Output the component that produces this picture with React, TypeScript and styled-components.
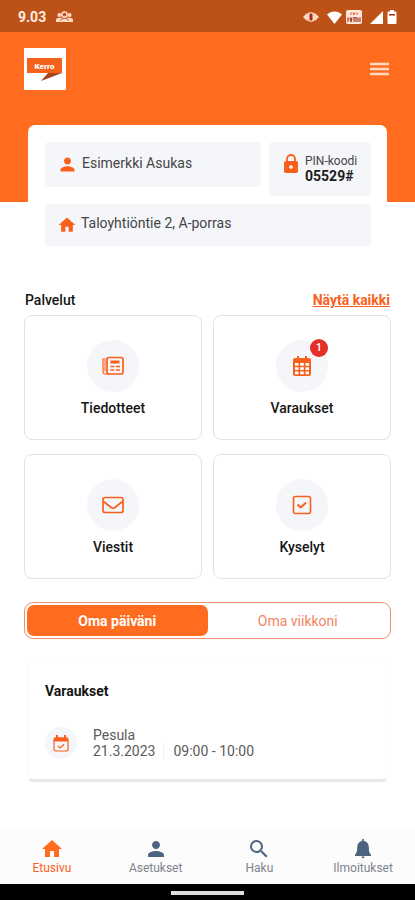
import React, { useState } from "react";
import styled, { createGlobalStyle } from "styled-components";
import { MdHome, MdPerson, MdSearch } from "react-icons/md";

const color = {
  brand: "#ff6c1f",
  accent: "#f9601b",
  status: "#bd5219",
  field: "#f4f6fa",
  slate: "#4d6480",
};

const GlobalStyle = createGlobalStyle`
  *, *::before, *::after { box-sizing: border-box; }
  body {
    margin: 0;
    background: #fff;
    color: #161616;
    font-family: Roboto, "Liberation Sans", sans-serif;
    font-size: 14px;
    line-height: 16px;
  }
  h2, p { margin: 0; padding: 0; }
  svg { display: block; flex: none; }
`;

const Screen = styled.div`
  min-height: 100vh;
  display: flex;
  flex-direction: column;
`;

const StatusBar = styled.div`
  height: 32px;
  padding: 2px 18px 0;
  display: flex;
  align-items: center;
  gap: 10px;
  background: ${color.status};
  color: #ffeee5;
  font-weight: 700;
`;

const StatusIcons = styled.div`
  margin-left: auto;
  display: flex;
  align-items: center;
  gap: 4px;
`;

const Header = styled.header`
  height: 170px;
  padding: 16px 26px 16px 24px;
  display: flex;
  justify-content: space-between;
  align-items: flex-start;
  background: ${color.brand};
`;

const IconButton = styled.button`
  margin-top: 12px;
  padding: 0;
  border: 0;
  background: none;
  color: #ffd9c4;
  cursor: pointer;
`;

const ProfileCard = styled.section`
  margin: -77px 28px 0;
  padding: 17px 16px 0 17px;
  display: grid;
  grid-template-columns: 1fr 102px;
  align-items: start;
  gap: 8px;
  border-radius: 7px 7px 0 0;
  background: #fff;
`;

const Field = styled.div<{ $wide?: boolean; $height: number }>`
  grid-column: ${(p) => (p.$wide ? "1 / -1" : "auto")};
  min-height: ${(p) => p.$height}px;
  padding: 0 12px;
  display: flex;
  align-items: center;
  gap: 4px;
  border-radius: 4px;
  background: ${color.field};
  color: #454545;
  svg { color: ${color.accent}; }
`;

const FieldText = styled.span`
  padding-bottom: 4px;
`;

const PinField = styled(Field)`
  padding: 12px 12px 0 13px;
  align-items: flex-start;
  gap: 5px;
`;

const PinText = styled.div`
  font-size: 12px;
  line-height: 15px;
  white-space: nowrap;
  strong {
    display: block;
    font-size: 14px;
    font-weight: 700;
    color: #1c1c1c;
  }
`;

const Main = styled.main`
  padding: 0 24px;
  display: flex;
  flex-direction: column;
`;

const SectionHead = styled.div`
  margin-top: 46px;
  padding: 0 1px 7px;
  display: flex;
  justify-content: space-between;
`;

const Heading = styled.h2<{ $bold?: boolean }>`
  font-size: 14px;
  line-height: 16px;
  font-weight: ${(p) => (p.$bold ? 700 : 500)};
`;

const AllLink = styled.a`
  color: ${color.accent};
  font-weight: 700;
`;

const Tiles = styled.div`
  display: grid;
  grid-template-columns: 1fr 1fr;
  gap: 14px 11px;
`;

const Tile = styled.button`
  height: 125px;
  padding: 0;
  display: flex;
  flex-direction: column;
  align-items: center;
  justify-content: center;
  gap: 8px;
  border: 1px solid #dfe2e9;
  border-radius: 8px;
  background: #fff;
  color: inherit;
  font: inherit;
  font-weight: 500;
  cursor: pointer;
`;

const IconDisc = styled.span<{ $size: number }>`
  position: relative;
  flex: none;
  width: ${(p) => p.$size}px;
  height: ${(p) => p.$size}px;
  display: grid;
  place-items: center;
  border-radius: 50%;
  background: ${color.field};
  color: ${color.accent};
`;

const Badge = styled.span`
  position: absolute;
  top: -1px;
  right: 0;
  width: 18px;
  height: 18px;
  border-radius: 50%;
  background: #e5302a;
  color: #fff;
  font-size: 11px;
  line-height: 18px;
  text-align: center;
`;

const Tabs = styled.div`
  height: 37px;
  margin-top: 23px;
  padding: 2px;
  display: grid;
  grid-template-columns: 1fr 1fr;
  border: 1px solid #f48f6c;
  border-radius: 9px;
`;

const Tab = styled.button<{ $active: boolean }>`
  padding: 0;
  border: 0;
  border-radius: 7px;
  background: ${(p) => (p.$active ? color.brand : "transparent")};
  color: ${(p) => (p.$active ? "#fff" : "#f4845f")};
  font: inherit;
  font-weight: ${(p) => (p.$active ? 700 : 400)};
  cursor: pointer;
`;

const DayCard = styled.section`
  margin: 18px 4px 0;
  padding: 25px 16px 20px;
  display: flex;
  flex-direction: column;
  gap: 28px;
  border: 1px solid #fafafb;
  border-top-color: #fefefe;
  border-bottom: 3px solid #e6e9ea;
  border-radius: 4px;
`;

const Booking = styled.div`
  display: flex;
  align-items: center;
  gap: 16px;
  color: #5a5a5a;
`;

const BookingTime = styled.p`
  display: flex;
  gap: 8px;
  span { border-left: 1px solid #eeeff1; padding-left: 9px; }
`;

const BottomNav = styled.nav`
  margin-top: auto;
  height: 56px;
  display: grid;
  grid-template-columns: repeat(4, 1fr);
  background: #fcfcfc;
`;

const NavItem = styled.a<{ $active?: boolean }>`
  padding-top: 9px;
  display: flex;
  flex-direction: column;
  align-items: center;
  color: ${(p) => (p.$active ? color.accent : "#7d838c")};
  font-size: 12px;
  line-height: 15px;
  text-decoration: none;
  svg { color: ${(p) => (p.$active ? color.brand : color.slate)}; }
`;

const GestureBar = styled.div`
  height: 16px;
  display: grid;
  place-items: center;
  background: #000;
  &::after {
    content: "";
    width: 73px;
    height: 4px;
    margin-top: 2px;
    background: #dedede;
  }
`;

const Logo = () => (
  <svg width="42" height="42" viewBox="0 0 42 42" role="img" aria-label="Kerro">
    <rect width="42" height="42" rx="1" fill="#fff" />
    <path d="M24 25h14L17 33z" fill="#a8441a" />
    <path d="M3 10h35v15H3z" fill="#f4621c" />
    <text x="20.5" y="20.5" textAnchor="middle" fontFamily="Roboto, sans-serif" fontSize="8" fontWeight="900" fill="#fff">Kerro</text>
  </svg>
);

const PeopleIcon = () => (
  <svg width="17" height="12" viewBox="0 0 17 12" fill="#ffd9c4" aria-hidden="true">
    <circle cx="3.400" cy="4" r="2" />
    <circle cx="13.600" cy="4" r="2" />
    <path d="M0 11V9c0-1.500 1.500-2.300 3.500-2.300h10c2 0 3.500.8 3.500 2.300v2z" />
    <circle cx="8.500" cy="3.500" r="2.600" fill="none" stroke="#ffd9c4" strokeWidth="1.500" />
    <path d="M4.500 9.500c.5-1.500 2-2 4-2s3.500.5 4 2" fill="none" stroke={color.status} strokeWidth="1" />
  </svg>
);

const StatusGlyphs = () => (
  <>
    <svg width="16" height="12" viewBox="0 0 16 12" aria-hidden="true">
      <path d="M0 6l4-4v8zM16 6l-4-4v8z" fill="#ffd9c4" />
      <circle cx="8" cy="6" r="4.800" fill="#ffd9c4" />
      <rect x="6.500" y="2.500" width="3" height="7" rx="1" fill="#a52b18" />
    </svg>
    <span />
    <svg width="15" height="13" viewBox="0 0 15 13" aria-hidden="true">
      <path d="M0 3.500C4.300-.5 10.700-.5 15 3.500L7.500 13z" fill="#fff" />
    </svg>
    <svg width="16" height="14" viewBox="0 0 16 14" aria-hidden="true">
      <rect width="16" height="14" rx="2" fill="#ffe6d9" />
      <path d="M5 2.500v2.500M7 2.500l1 2.500 1-2.500M11 2.500v2.500" stroke="#c9602f" fill="none" />
      <path d="M2 7.500v4.500M4 7.500l1 4.500 1-4.500M8 12V7.500h2V12M12 7.500v4.500M14 7.500v4.500" stroke="#a53a20" strokeWidth="1.200" fill="none" />
    </svg>
    <span />
    <svg width="13" height="13" viewBox="0 0 13 13" aria-hidden="true">
      <path d="M13 0v13H0z" fill="#fff" />
    </svg>
    <svg width="10" height="14" viewBox="0 0 10 14" aria-hidden="true">
      <path d="M3 0h4v1.500h1.500Q9.500 1.500 9.500 2.500V13q0 1-1 1h-7q-1 0-1-1V2.500q0-1 1-1H3z" fill="#fff" />
      <path d="M2 4h6v1.500H2z" fill="#a52b18" />
    </svg>
  </>
);

const MenuIcon = () => (
  <svg width="20" height="18" viewBox="0 0 20 18" stroke="currentColor" strokeWidth="2.600" aria-hidden="true">
    <path d="M1 4h19M1 9h19M1 14h19" />
  </svg>
);

const LockIcon = () => (
  <svg width="18" height="20" viewBox="0 0 18 20" aria-hidden="true">
    <path d="M5 8V5a4 4 0 0 1 8 0v3" fill="none" stroke="currentColor" strokeWidth="1.800" />
    <rect x="2" y="7" width="14" height="12" rx="1.800" fill="currentColor" />
    <path d="M9 11v4M7 13h4" stroke="#fff" strokeWidth="1.500" />
  </svg>
);

const NewsIcon = () => (
  <svg width="22" height="20" viewBox="0 0 22 20" fill="none" stroke="currentColor" aria-hidden="true">
    <rect x="5" y="1.500" width="16" height="16.500" rx="2" strokeWidth="1.700" />
    <path d="M4.500 3H1v12.500C1 17 2 18 3.500 18H7" strokeWidth="1.200" />
    <path d="M3 4v11.500" strokeWidth="1" />
    <path d="M8.500 6h9" strokeWidth="3" />
    <path d="M8.500 10.500h4M14 10.500h4M8.500 14h4M14 14h4" strokeWidth="1.500" />
  </svg>
);

const CalendarIcon = () => (
  <svg width="20" height="20" viewBox="0 0 20 20" aria-hidden="true">
    <path d="M5 0h2v2h6V0h2v2h2q2 0 2 2v14q0 2-2 2H3q-2 0-2-2V4q0-2 2-2h2z" fill="currentColor" />
    <path
      fill="#fff"
      d="M3 7h3.500v2.800H3zM8.200 7h3.600v2.800H8.200zM13.500 7H17v2.800h-3.500zM3 11.200h3.500V14H3zM8.200 11.200h3.600V14H8.200zM13.500 11.200H17V14h-3.500zM3 15.500h3.500v2.700H3zM8.200 15.500h3.600v2.700H8.200zM13.500 15.500H17v2.700h-3.500z"
    />
  </svg>
);

const MailIcon = () => (
  <svg width="22" height="18" viewBox="0 0 22 18" fill="none" stroke="currentColor" strokeWidth="1.700" aria-hidden="true">
    <rect x="1" y="1.500" width="20" height="15" rx="2" />
    <path d="M1.500 5.500l8 6.200q1.500 1 3 0l8-6.200" />
  </svg>
);

const CheckIcon = () => (
  <svg width="20" height="20" viewBox="0 0 20 20" fill="none" stroke="currentColor" aria-hidden="true">
    <rect x="1.500" y="1.500" width="17" height="17" rx="2" strokeWidth="1.600" />
    <path d="M5.500 9.500l3.200 3 5.500-5" strokeWidth="2" />
  </svg>
);

const BookedIcon = () => (
  <svg width="16" height="17" viewBox="0 0 16 17" fill="none" stroke="currentColor" aria-hidden="true">
    <rect x="1" y="3" width="14" height="13" rx="2" strokeWidth="1.200" />
    <path d="M1 2.500h14v4H1z" fill="currentColor" stroke="none" />
    <path d="M4 0v3M12 0v3" strokeWidth="2" />
    <path d="M5 11l2.200 2L11 9.300" strokeWidth="1.200" />
  </svg>
);

const BellIcon = () => (
  <svg width="24" height="24" viewBox="0 0 24 24" fill="currentColor" aria-hidden="true">
    <path d="M11.200 2h1.600v1.800c3.200.9 5 3.300 5 6.200 0 4.500.7 6.500 2.200 7.500V19H4v-1.500c1.500-1 2.200-3 2.200-7.500 0-2.900 1.800-5.300 5-6.200zM10.300 19.500h3.400q-.3 1.800-1.700 1.800t-1.700-1.800z" />
  </svg>
);

const services = [
  { name: "Tiedotteet", Icon: NewsIcon },
  { name: "Varaukset", Icon: CalendarIcon, count: 1 },
  { name: "Viestit", Icon: MailIcon },
  { name: "Kyselyt", Icon: CheckIcon },
];

const tabs = ["Oma päiväni", "Oma viikkoni"];

export default function App() {
  const [tab, setTab] = useState(0);
  return (
    <>
      <GlobalStyle />
      <Screen>
        <StatusBar>
          <span>9.03</span>
          <PeopleIcon />
          <StatusIcons>
            <StatusGlyphs />
          </StatusIcons>
        </StatusBar>
        <Header>
          <Logo />
          <IconButton aria-label="Valikko">
            <MenuIcon />
          </IconButton>
        </Header>
        <ProfileCard>
          <Field $height={45}>
            <MdPerson size={21} />
            <FieldText>Esimerkki Asukas</FieldText>
          </Field>
          <PinField $height={54}>
            <LockIcon />
            <PinText>
              PIN-koodi <strong>05529#</strong>
            </PinText>
          </PinField>
          <Field $wide $height={42}>
            <MdHome size={20} />
            <FieldText>Taloyhtiöntie 2, A-porras</FieldText>
          </Field>
        </ProfileCard>
        <Main>
          <SectionHead>
            <Heading>Palvelut</Heading>
            <AllLink href="#palvelut">Näytä kaikki</AllLink>
          </SectionHead>
          <Tiles>
            {services.map(({ name, Icon, count }) => (
              <Tile key={name}>
                <IconDisc $size={52}>
                  <Icon />
                  {count && <Badge>{count}</Badge>}
                </IconDisc>
                {name}
              </Tile>
            ))}
          </Tiles>
          <Tabs role="tablist">
            {tabs.map((label, i) => (
              <Tab key={label} role="tab" aria-selected={tab === i} $active={tab === i} onClick={() => setTab(i)}>
                {label}
              </Tab>
            ))}
          </Tabs>
          <DayCard>
            <Heading $bold>Varaukset</Heading>
            <Booking>
              <IconDisc $size={32}>
                <BookedIcon />
              </IconDisc>
              <div>
                <p>Pesula</p>
                <BookingTime>
                  21.3.2023 <span>09:00 - 10:00</span>
                </BookingTime>
              </div>
            </Booking>
          </DayCard>
        </Main>
        <BottomNav>
          <NavItem href="#etusivu" $active>
            <MdHome size={24} />
            Etusivu
          </NavItem>
          <NavItem href="#asetukset">
            <MdPerson size={24} />
            Asetukset
          </NavItem>
          <NavItem href="#haku">
            <MdSearch size={24} />
            Haku
          </NavItem>
          <NavItem href="#ilmoitukset">
            <BellIcon />
            Ilmoitukset
          </NavItem>
        </BottomNav>
        <GestureBar />
      </Screen>
    </>
  );
}
